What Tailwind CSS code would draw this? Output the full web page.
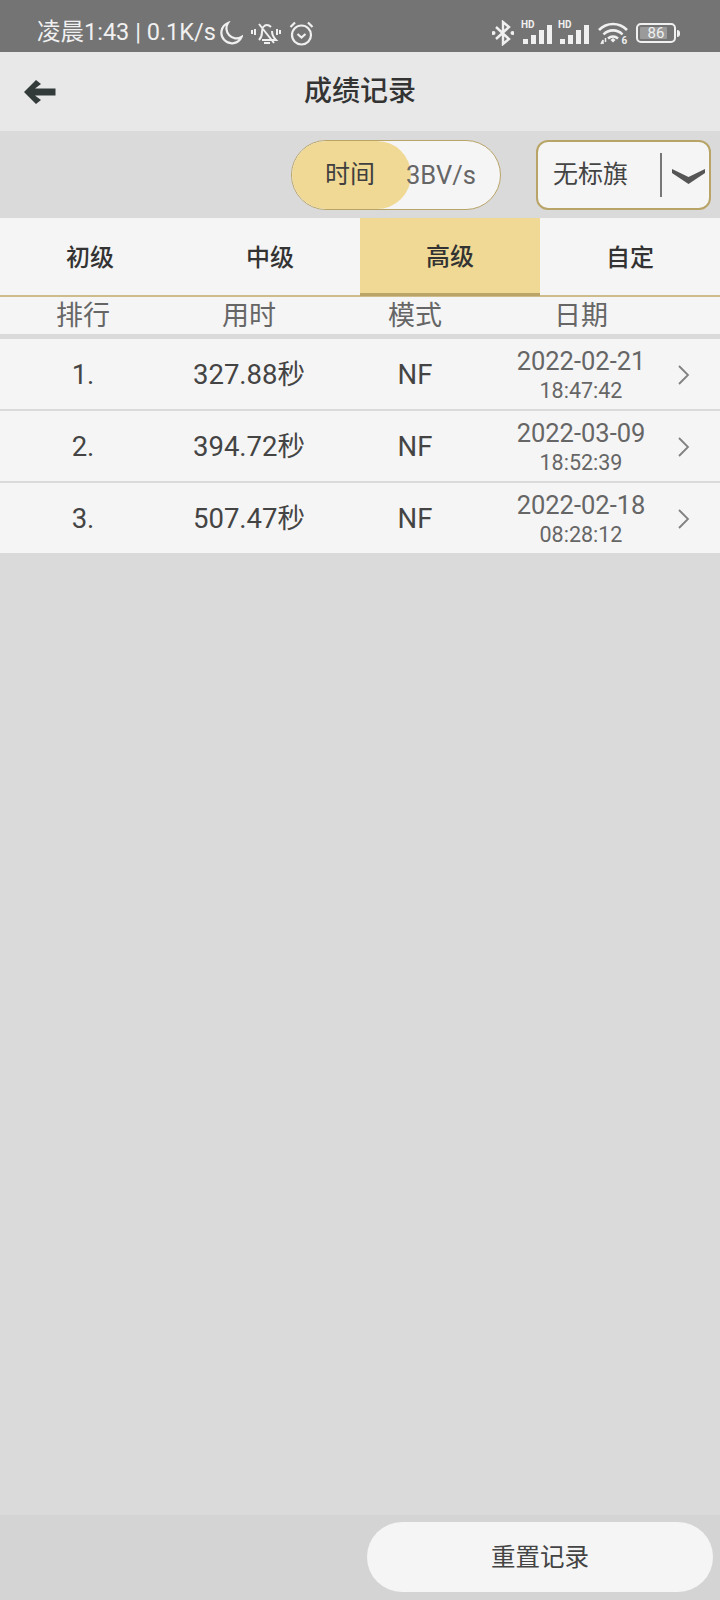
<!DOCTYPE html>
<html lang="zh">

<head>
    <meta charset="UTF-8">
    <meta name="viewport" content="width=device-width, initial-scale=1.0">
    <title>成绩记录</title>
    <script src="https://cdn.jsdelivr.net/npm/@tailwindcss/browser@4"></script>
</head>

<body class="bg-[#dadada] font-['Roboto','Noto_Sans_CJK_SC',sans-serif]">
    <div class="w-[720px] h-[1600px] flex flex-col overflow-hidden">

        <!-- Status bar -->
        <div class="h-[52px] bg-[#747474] flex items-center pt-[14px] pl-[37px] pr-[40px] text-[#f0f0f0] shrink-0">
            <span class="text-[23.5px] leading-none whitespace-nowrap">凌晨1:43 | 0.1K/s</span>
            <svg class="ml-[3px] w-[24px] h-[24px]" viewBox="0 0 24 24" fill="none" stroke="#f0f0f0" stroke-width="2.200"><path d="M9 2a10.500 10.500 0 1 0 13.500 14A10 10 0 0 1 9 2z" /></svg>
            <svg class="ml-[8px] w-[30px] h-[26px]" viewBox="0 0 30 26" fill="none" stroke="#f0f0f0" stroke-width="2"><path d="M8 20c2-2 3-4 3-8 0-4 2-7 5-7 2 0 3 1 4 2M21 11c0 4 2 7 4 9H11M13 23h6M8 4l15 19M4 9v6M1 10v4M26 9v6M29 10v4" /></svg>
            <svg class="ml-[8px] w-[25px] h-[25px]" viewBox="0 0 25 25" fill="none" stroke="#f0f0f0" stroke-width="2.200"><circle cx="12.500" cy="14" r="9.500" /><path d="M8.500 13l4 3.500 4-3.500M1.500 6l4.500-4.500M23.500 6l-4.500-4.500" /></svg>
            <div class="ml-auto flex items-center">
                <svg class="w-[22px] h-[26px]" viewBox="0 0 22 26" fill="none" stroke="#f0f0f0" stroke-width="2.400"><path d="M4 7l13 12-6 5V2l6 5L4 19" /><circle cx="1.500" cy="13" r="2" fill="#f0f0f0" stroke="none" /><circle cx="20.500" cy="13" r="2" fill="#f0f0f0" stroke="none" /></svg>
                <div class="ml-[7px] relative w-[32px] h-[24px]">
                    <span class="absolute left-0 top-[-1px] text-[10px] leading-none font-bold">HD</span>
                    <div class="absolute left-[2px] bottom-[1px] flex items-end gap-[3px]">
                        <i class="block w-[5px] h-[5px] bg-[#f0f0f0]"></i><i class="block w-[5px] h-[9px] bg-[#f0f0f0]"></i><i class="block w-[5px] h-[14px] bg-[#f0f0f0]"></i><i class="block w-[5px] h-[19px] bg-[#f0f0f0]"></i>
                    </div>
                </div>
                <div class="ml-[5px] relative w-[32px] h-[24px]">
                    <span class="absolute left-0 top-[-1px] text-[10px] leading-none font-bold">HD</span>
                    <div class="absolute left-[2px] bottom-[1px] flex items-end gap-[3px]">
                        <i class="block w-[5px] h-[5px] bg-[#f0f0f0]"></i><i class="block w-[5px] h-[9px] bg-[#f0f0f0]"></i><i class="block w-[5px] h-[14px] bg-[#f0f0f0]"></i><i class="block w-[5px] h-[19px] bg-[#f0f0f0]"></i>
                    </div>
                </div>
                <svg class="ml-[8px] mt-[4px] w-[30px] h-[26px]" viewBox="0 0 30 26" fill="none" stroke="#f0f0f0" stroke-width="2.600">
                    <path d="M1 8c8-8 20-8 28 0M5.500 12.500c5-5.500 14-5.500 19 0M10 16.500c3-2.500 7-2.500 10 0" />
                    <path d="M12.500 18l2.500-2 2.500 2-2.500 2.500z" fill="#f0f0f0" stroke="none" />
                    <path d="M3 22l2-4v4M7.500 16v4" stroke-width="1.500" />
                    <text x="23.500" y="22" font-size="10" font-weight="700" fill="#f0f0f0" stroke="none">6</text>
                </svg>
                <div class="ml-[8px] w-[40px] h-[20px] rounded-[5px] border-2 border-[#f0f0f0] p-[2px] relative">
                    <div class="h-full w-[85%] bg-[#9a9a9a] rounded-[1px]"></div>
                    <span class="absolute inset-0 flex items-center justify-center text-[15px] leading-none">86</span>
                </div>
                <div class="ml-[1px] w-[3px] h-[7px] bg-[#f0f0f0] rounded-r-sm"></div>
            </div>
        </div>

        <!-- Title bar -->
        <div class="h-[79px] bg-[#e8e8e8] relative flex items-center justify-center pt-[1px] shrink-0">
            <svg class="absolute left-[24px] top-[28px] w-[32px] h-[24px]" viewBox="0 0 32 24" fill="#333a3a"><path d="M0 12L12 0l5 4-6 4.500h20.500v7H11l6 4.500-5 4z" /></svg>
            <span class="text-[28px] leading-none font-medium text-[#333]">成绩记录</span>
        </div>

        <!-- Filter row -->
        <div class="h-[87px] bg-[#dadada] flex items-start pt-[9px] shrink-0">
            <div class="ml-[291px] w-[210px] h-[70px] rounded-full border-[1.5px] border-[#b9a468] bg-[#f5f5f5] relative flex items-center overflow-hidden">
                <div class="w-[119px] h-full pr-[3px] bg-[#f0d994] rounded-full flex items-center justify-center text-[25px] text-[#3f3f3f]">时间</div>
                <span class="ml-[-5px] relative text-[25.5px] text-[#666]">3BV/s</span>
            </div>
            <div class="ml-[35px] w-[175px] h-[70px] rounded-[12px] border-2 border-[#b9a468] bg-[#f5f5f5] flex items-center">
                <span class="ml-[15px] text-[25px] text-[#444]">无标旗</span>
                <div class="ml-[32px] w-[2px] h-[44px] bg-[#777]"></div>
                <svg class="ml-[10px] w-[33px] h-[17px]" viewBox="0 0 33 17" fill="#555"><path d="M0 2l16.500 8L33 2v4L16.500 17 0 6z" /></svg>
            </div>
        </div>

        <!-- Level tabs -->
        <div class="h-[79px] bg-[#f5f5f5] border-b-2 border-[#cdbd8c] grid grid-cols-4 text-[24px] font-medium text-[#333] shrink-0">
            <div class="flex items-center justify-center pt-[3px]">初级</div>
            <div class="flex items-center justify-center pt-[3px]">中级</div>
            <div class="flex items-center justify-center pt-[3px] bg-[#f0d994] border-b-[3px] border-[#bba468] mb-[-1px]">高级</div>
            <div class="flex items-center justify-center pt-[3px]">自定</div>
        </div>

        <!-- Column heads -->
        <div class="h-[37px] bg-[#f5f5f5] grid grid-cols-[166px_166px_166px_166px_56px] text-[27px] leading-none text-[#666] pt-[1px] shrink-0">
            <div class="flex items-center justify-center">排行</div>
            <div class="flex items-center justify-center">用时</div>
            <div class="flex items-center justify-center">模式</div>
            <div class="flex items-center justify-center">日期</div>
        </div>

        <!-- Records -->
        <div class="mt-[5px] flex flex-col gap-[2px] bg-[#dadada]">
            <div class="h-[70px] pt-[2px] bg-[#f5f5f5] grid grid-cols-[166px_166px_166px_166px_56px] items-center text-[#444]">
                <div class="text-center text-[27.5px]">1.</div>
                <div class="text-center text-[27.5px]">327.88秒</div>
                <div class="text-center text-[27.5px]">NF</div>
                <div class="flex flex-col items-center text-[#666]">
                    <span class="text-[25.5px] leading-[32px]">2022-02-21</span>
                    <span class="text-[21.5px] leading-[28px]">18:47:42</span>
                </div>
                <svg class="ml-[13px] w-[14px] h-[22px]" viewBox="0 0 14 22" fill="none" stroke="#808080" stroke-width="1.800"><path d="M2 2l9 9-9 9" /></svg>
            </div>
            <div class="h-[70px] pt-[2px] bg-[#f5f5f5] grid grid-cols-[166px_166px_166px_166px_56px] items-center text-[#444]">
                <div class="text-center text-[27.5px]">2.</div>
                <div class="text-center text-[27.5px]">394.72秒</div>
                <div class="text-center text-[27.5px]">NF</div>
                <div class="flex flex-col items-center text-[#666]">
                    <span class="text-[25.5px] leading-[32px]">2022-03-09</span>
                    <span class="text-[21.5px] leading-[28px]">18:52:39</span>
                </div>
                <svg class="ml-[13px] w-[14px] h-[22px]" viewBox="0 0 14 22" fill="none" stroke="#808080" stroke-width="1.800"><path d="M2 2l9 9-9 9" /></svg>
            </div>
            <div class="h-[70px] pt-[2px] bg-[#f5f5f5] grid grid-cols-[166px_166px_166px_166px_56px] items-center text-[#444]">
                <div class="text-center text-[27.5px]">3.</div>
                <div class="text-center text-[27.5px]">507.47秒</div>
                <div class="text-center text-[27.5px]">NF</div>
                <div class="flex flex-col items-center text-[#666]">
                    <span class="text-[25.5px] leading-[32px]">2022-02-18</span>
                    <span class="text-[21.5px] leading-[28px]">08:28:12</span>
                </div>
                <svg class="ml-[13px] w-[14px] h-[22px]" viewBox="0 0 14 22" fill="none" stroke="#808080" stroke-width="1.800"><path d="M2 2l9 9-9 9" /></svg>
            </div>
        </div>

        <!-- Footer -->
        <div class="mt-auto h-[85px] bg-[#d4d4d4] flex items-start justify-end pt-[7px] pr-[7px] shrink-0">
            <button class="w-[346px] h-[70px] pt-[2px] rounded-full bg-[#f5f5f5] text-[24.5px] text-[#444]">重置记录</button>
        </div>
    </div>
</body>

</html>
